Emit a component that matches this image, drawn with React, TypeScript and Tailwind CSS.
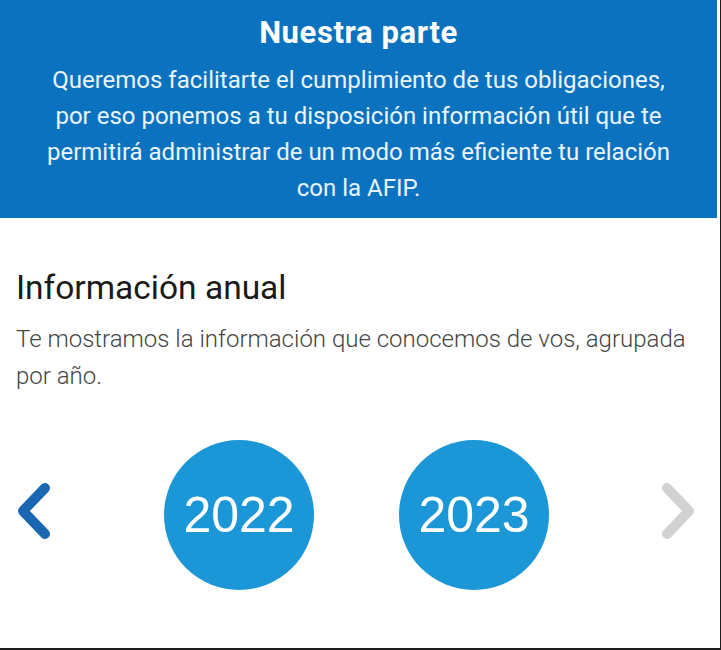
import React from 'react';

const YEARS = ['2022', '2023'];

function Chevron({ dir, color }: { dir: 'left' | 'right'; color: string }) {
  const points = dir === 'left' ? '30,6 8,29 30,52' : '8,6 30,29 8,52';
  return (
    <svg width="38" height="58" viewBox="0 0 38 58" fill="none">
      <polyline points={points} stroke={color} strokeWidth="10" strokeLinecap="round" strokeLinejoin="round" />
    </svg>
  );
}

export default function App() {
  return (
    <div className="w-[721px] h-[650px] bg-white border-r border-b-2 border-[#1c1c1c] overflow-hidden" style={{ fontFamily: 'Roboto, "Liberation Sans", sans-serif' }}>
      <div className="w-[717px] h-[218px] bg-[#0a72bf] flex flex-col items-center pt-[14px]">
        <h1 className="text-[31px] leading-[38px] font-bold tracking-[0.6px] text-white">Nuestra parte</h1>
        <p className="mt-[10px] text-[24px] leading-[36px] text-[#eaf6ff] text-center">
          Queremos facilitarte el cumplimiento de tus obligaciones,<br />
          por eso ponemos a tu disposición información útil que te<br />
          permitirá administrar de un modo más eficiente tu relación<br />
          con la AFIP.
        </p>
      </div>

      <div className="px-4 pt-[51px]">
        <h2 className="text-[33.5px] leading-[38px] font-normal text-[#1a1a1a]">Información anual</h2>
        <p className="mt-[14px] text-[24px] leading-[37px] text-[#454545] font-light">
          Te mostramos la información que conocemos de vos, agrupada por año.
        </p>
      </div>

      <div className="flex items-center mt-[45px] h-[150px]">
        <div className="ml-[15px] w-[38px] flex justify-center -translate-y-[4px]">
          <Chevron dir="left" color="#1a67b1" />
        </div>
        <div className="flex gap-[85px] ml-[111px]">
          {YEARS.map(y => (
            <div key={y} className="w-[150px] h-[150px] rounded-full bg-[#1b97d7] flex items-center justify-center">
              <span className="text-white text-[50px] leading-none" style={{ fontFamily: '"Liberation Sans", Arial, sans-serif' }}>{y}</span>
            </div>
          ))}
        </div>
        <div className="ml-[110px] w-[38px] flex justify-center -translate-y-[4px]">
          <Chevron dir="right" color="#d2d2d2" />
        </div>
      </div>
    </div>
  );
}
